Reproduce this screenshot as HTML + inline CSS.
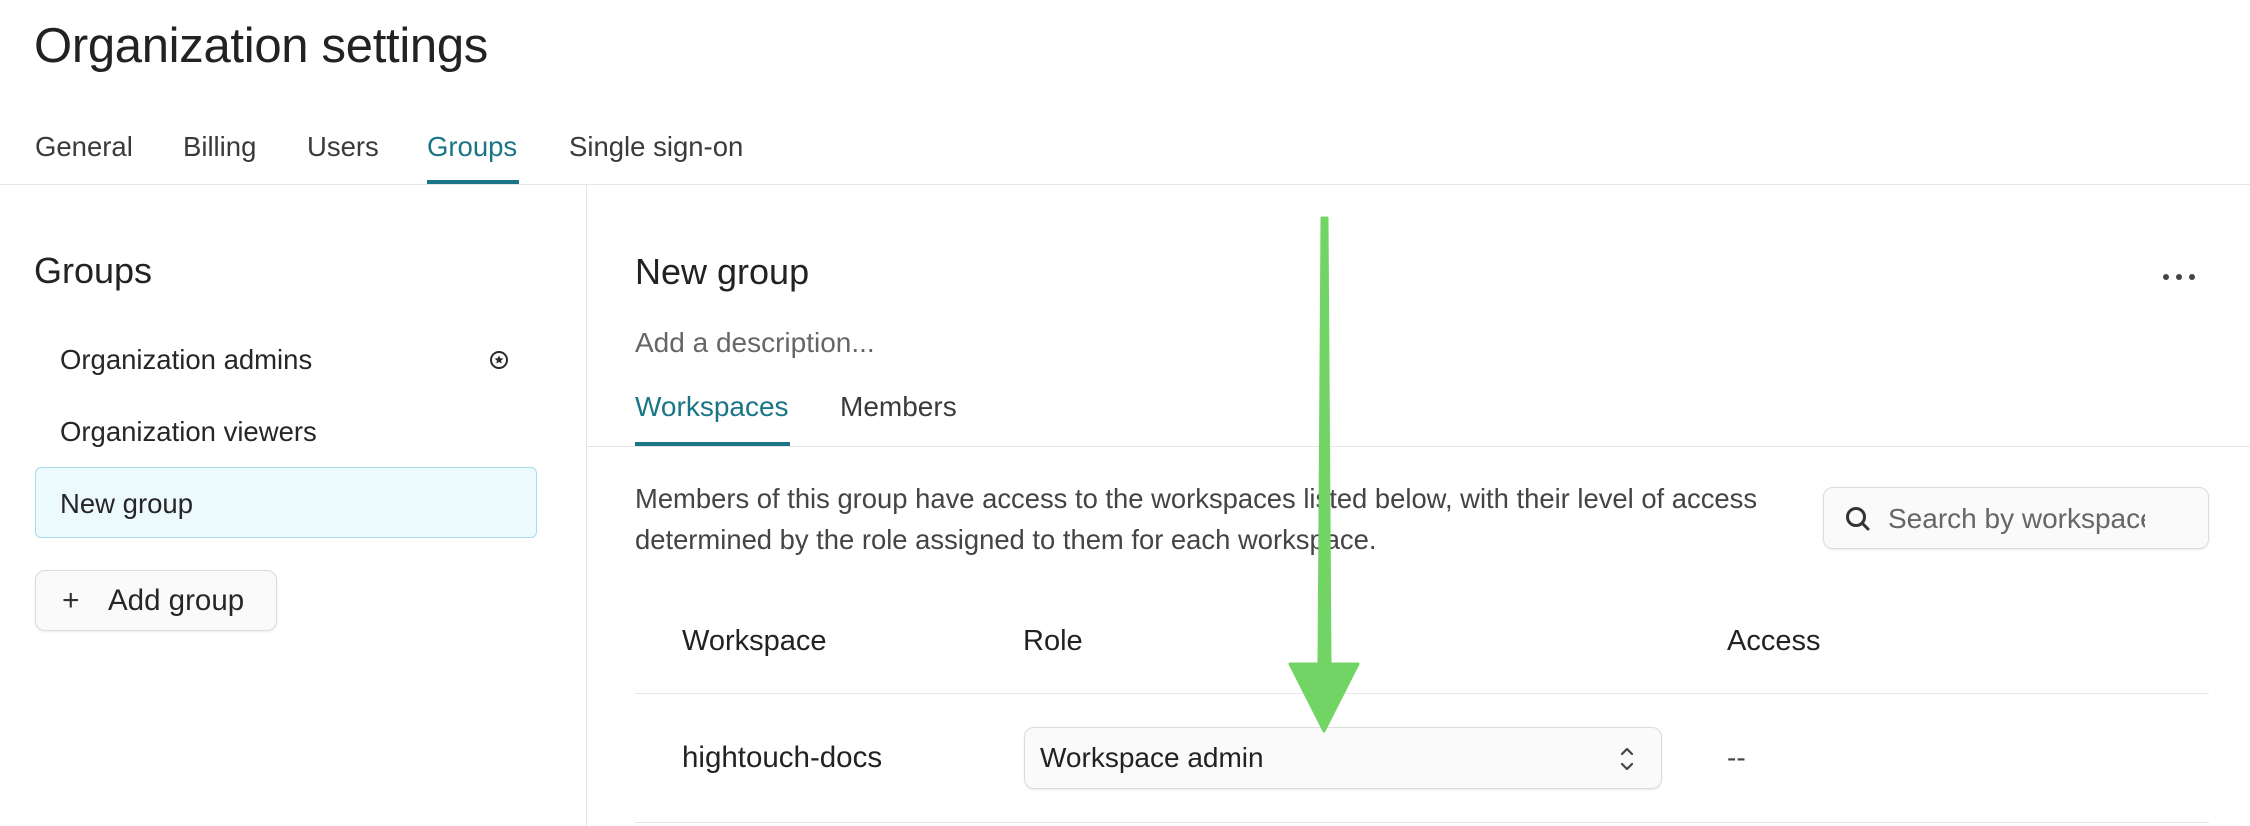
<!DOCTYPE html>
<html><head><meta charset="utf-8"><style>
*{box-sizing:border-box;margin:0;padding:0}
body{width:2250px;height:826px;overflow:hidden;background:#fff;font-family:"Liberation Sans",sans-serif;color:#262626;position:relative}
.a{position:absolute;white-space:nowrap}
.tab{font-size:27.5px;color:#3a3a3a;top:131px}
</style></head><body>
<div class="a" style="left:34px;top:18px;font-size:49px;color:#222;letter-spacing:-0.3px">Organization settings</div>
<div class="a tab" style="left:35px">General</div>
<div class="a tab" style="left:183px">Billing</div>
<div class="a tab" style="left:307px">Users</div>
<div class="a tab" style="left:427px;color:#1a7687">Groups</div>
<div class="a tab" style="left:569px">Single sign-on</div>
<div class="a" style="left:427px;top:180px;width:92px;height:4px;background:#1a7687"></div>
<div class="a" style="left:0;top:184px;width:2250px;height:1px;background:#e6e6e6"></div>
<div class="a" style="left:586px;top:185px;width:1px;height:641px;background:#e6e6e6"></div>

<div class="a" style="left:34px;top:250px;font-size:36px;color:#222">Groups</div>
<div class="a" style="left:60px;top:344px;font-size:27.5px">Organization admins</div>
<svg class="a" style="left:489px;top:350px" width="20" height="20" viewBox="0 0 20 20"><circle cx="10" cy="10" r="8" fill="none" stroke="#2a2a2a" stroke-width="2"/><path d="M10 5.5l1.3 2.8 3 .3-2.3 2 .7 3-2.7-1.6-2.7 1.6.7-3-2.3-2 3-.3z" fill="#2a2a2a"/></svg>
<div class="a" style="left:60px;top:416px;font-size:27.5px">Organization viewers</div>
<div class="a" style="left:35px;top:467px;width:502px;height:71px;background:#ecf9fd;border:1px solid #a9dcea;border-radius:6px"></div>
<div class="a" style="left:60px;top:488px;font-size:27.5px">New group</div>
<div class="a" style="left:35px;top:570px;width:242px;height:61px;background:#fafafa;border:1px solid #dcdcdc;border-radius:10px;box-shadow:0 1px 2px rgba(0,0,0,.08)"></div>
<div class="a" style="left:62px;top:584px;font-size:30px;color:#333">+</div>
<div class="a" style="left:108px;top:584px;font-size:29.5px">Add group</div>

<div class="a" style="left:635px;top:251px;font-size:36px;color:#222">New group</div>
<div class="a" style="left:2163px;top:267px"><span style="display:inline-block;width:6px;height:6px;border-radius:50%;background:#444;margin-right:7px"></span><span style="display:inline-block;width:6px;height:6px;border-radius:50%;background:#444;margin-right:7px"></span><span style="display:inline-block;width:6px;height:6px;border-radius:50%;background:#444"></span></div>
<div class="a" style="left:635px;top:327px;font-size:28px;color:#666">Add a description...</div>
<div class="a" style="left:635px;top:391px;font-size:28px;color:#1a7687">Workspaces</div>
<div class="a" style="left:840px;top:391px;font-size:28px;color:#3a3a3a">Members</div>
<div class="a" style="left:635px;top:442px;width:155px;height:4px;background:#1a7687"></div>
<div class="a" style="left:587px;top:446px;width:1663px;height:1px;background:#e6e6e6"></div>

<div class="a" style="left:635px;top:478px;font-size:27.4px;line-height:41px;color:#444">Members of this group have access to the workspaces listed below, with their level of access<br>determined by the role assigned to them for each workspace.</div>
<div class="a" style="left:1823px;top:487px;width:386px;height:62px;background:#fafafa;border:1px solid #dcdcdc;border-radius:10px;box-shadow:0 1px 2px rgba(0,0,0,.08)"></div>
<svg class="a" style="left:1844px;top:505px" width="28" height="28" viewBox="0 0 28 28"><circle cx="12" cy="12" r="8.5" fill="none" stroke="#333" stroke-width="3"/><path d="M18 18l6 6" stroke="#333" stroke-width="3" stroke-linecap="round"/></svg>
<div class="a" style="left:1888px;top:503px;width:257px;overflow:hidden;font-size:28px;color:#666">Search by workspace</div>

<div class="a" style="left:682px;top:625px;font-size:29px;color:#222">Workspace</div>
<div class="a" style="left:1023px;top:625px;font-size:29px;color:#222">Role</div>
<div class="a" style="left:1727px;top:625px;font-size:29px;color:#222">Access</div>
<div class="a" style="left:635px;top:693px;width:1574px;height:1px;background:#e6e6e6"></div>
<div class="a" style="left:682px;top:741px;font-size:29.5px;color:#222">hightouch-docs</div>
<div class="a" style="left:1024px;top:727px;width:638px;height:62px;background:#fafafa;border:1px solid #dcdcdc;border-radius:10px;box-shadow:0 1px 2px rgba(0,0,0,.08)"></div>
<div class="a" style="left:1040px;top:742px;font-size:28px;color:#222">Workspace admin</div>
<svg class="a" style="left:1617px;top:744px" width="20" height="30" viewBox="0 0 20 30"><path d="M5 10l5-5 5 5M5 20l5 5 5-5" fill="none" stroke="#444" stroke-width="2.2" stroke-linecap="round" stroke-linejoin="round"/></svg>
<div class="a" style="left:1727px;top:742px;font-size:28px;color:#444">--</div>
<div class="a" style="left:635px;top:822px;width:1574px;height:1px;background:#e6e6e6"></div>

<svg class="a" style="left:0;top:0" width="2250" height="826"><path d="M1322 218 L1327 218 L1330 664 L1358 664 L1324 731 L1290 664 L1319 664 Z" fill="#71d465" stroke="#71d465" stroke-width="3" stroke-linejoin="round"/></svg>
</body></html>
